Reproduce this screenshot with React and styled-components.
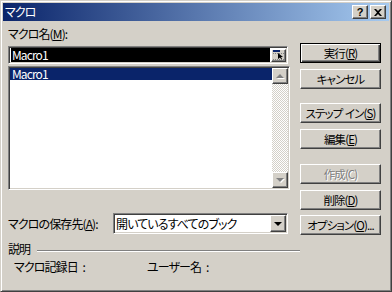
import React from "react";
import styled, { createGlobalStyle, css } from "styled-components";

const Global = createGlobalStyle`
  html, body { margin: 0; padding: 0; background: #d4d0c8; }
  body {
    font-family: "Noto Sans CJK JP", "Noto Sans", sans-serif;
    font-size: 12px;
    font-feature-settings: "palt";
    letter-spacing: -0.9px;
    color: #000;
  }
  * { box-sizing: border-box; }
`;

const raised = css`
  border: 1px solid;
  border-color: #fff #404040 #404040 #fff;
  box-shadow: inset -1px -1px #808080, inset 1px 1px #d4d0c8;
  background: #d4d0c8;
`;

const sunken = css`
  border: 1px solid;
  border-color: #808080 #fff #fff #808080;
  box-shadow: inset 1px 1px #404040, inset -1px -1px #d4d0c8;
  padding: 1px;
`;

const Window = styled.div`
  width: 392px;
  height: 292px;
  background: #d4d0c8;
  border: 1px solid;
  border-color: #d4d0c8 #404040 #404040 #d4d0c8;
  box-shadow: inset 1px 1px #fff, inset -1px -1px #808080;
  padding: 2px;
  display: flex;
  flex-direction: column;
  overflow: hidden;
`;

const TitleBar = styled.div`
  height: 18px;
  background: linear-gradient(to right, #0a246a, #a6caf0);
  display: flex;
  align-items: center;
  padding: 0 3px 0 2px;
  gap: 2px;
`;

const TitleText = styled.div`
  flex: 1;
  color: #fff;
  font-size: 12px;
  line-height: 18px;
`;

const CaptionButton = styled.div`
  ${raised};
  width: 16px;
  height: 14px;
  display: flex;
  align-items: center;
  justify-content: center;
  font-family: "Liberation Sans", sans-serif;
  font-weight: bold;
  font-size: 11px;
  letter-spacing: 0;
  line-height: 12px;
`;

const Body = styled.div`
  display: grid;
  grid-template-columns: 281px 81px;
  column-gap: 11px;
  padding: 6px 0 0 5px;
`;

const LeftCol = styled.div`
  display: flex;
  flex-direction: column;
`;

const Label = styled.div`
  height: 14px;
  line-height: 14px;
  white-space: nowrap;
`;

const EditBox = styled.div`
  ${sunken};
  margin-top: 5px;
  width: 280px;
  height: 18px;
  padding: 0 1px;
  background: #fff;
  display: flex;
  align-items: center;
`;

const EditSel = styled.div`
  flex: 1;
  height: 14px;
  margin-left: 1px;
  background: #000;
  color: #fff;
  line-height: 14px;
  padding-left: 1px;
`;

const RefButton = styled.div`
  ${raised};
  width: 15px;
  height: 13px;
  margin-left: 1px;
  display: flex;
  align-items: center;
  justify-content: center;
`;

const ListBox = styled.div`
  ${sunken};
  margin-top: 2px;
  width: 282px;
  height: 124px;
  background: #fff;
  display: flex;
`;

const Items = styled.div`
  flex: 1;
  display: flex;
  flex-direction: column;
`;

const Item = styled.div`
  height: 12px;
  line-height: 12px;
  padding-left: 2px;
  background: ${(p) => (p.$selected ? "#0a246a" : "transparent")};
  color: ${(p) => (p.$selected ? "#fff" : "#000")};
`;

const ScrollBar = styled.div`
  width: 16px;
  display: flex;
  flex-direction: column;
`;

const ScrollTrack = styled.div`
  flex: 1;
  background: repeating-conic-gradient(#fff 0 25%, #d4d0c8 0 50%) 0 0 / 2px 2px;
`;

const ScrollBtn = styled.div`
  ${raised};
  width: 16px;
  height: 16px;
  display: flex;
  align-items: center;
  justify-content: center;
`;

const SaveRow = styled.div`
  margin-top: 23px;
  display: flex;
  align-items: center;
`;

const SaveLabel = styled(Label)`
  width: 105px;
`;

const Select = styled.div`
  ${sunken};
  width: 175px;
  height: 21px;
  background: #fff;
  display: flex;
  align-items: center;
`;

const SelectText = styled.div`
  flex: 1;
  padding-left: 1px;
  line-height: 15px;
  white-space: nowrap;
  overflow: hidden;
`;

const DropBtn = styled(ScrollBtn)`
  height: 17px;
`;

const RightCol = styled.div`
  display: flex;
  flex-direction: column;
  padding-top: 16px;
`;

const Button = styled.div`
  ${raised};
  height: 20px;
  width: 81px;
  margin-top: ${(p) => p.$gap || 0}px;
  display: flex;
  align-items: center;
  justify-content: center;
  font-size: 11.5px;
  letter-spacing: -0.9px;
  word-spacing: 1px;
  line-height: 14px;
  white-space: pre;
  color: ${(p) => (p.$disabled ? "#808080" : "#000")};
  text-shadow: ${(p) => (p.$disabled ? "1px 1px #fff" : "none")};
  ${(p) =>
    p.$default &&
    css`
      border: 1px solid #000;
      box-shadow: inset 1px 1px #fff, inset -1px -1px #404040,
        inset -2px -2px #808080;
    `}
  u { text-decoration: underline; text-underline-offset: 1px; }
`;

const Desc = styled.div`
  padding: 5px 0 0 5px;
  display: flex;
  flex-direction: column;
`;

const DescHeader = styled.div`
  width: 292px;
  display: flex;
  align-items: center;
  gap: 7px;
`;

const Etched = styled.div`
  flex: 1;
  height: 2px;
  margin-top: 4px;
  border-top: 1px solid #808080;
  border-bottom: 1px solid #fff;
`;

const DescRow = styled.div`
  display: grid;
  grid-template-columns: 133px auto;
  padding-left: 6px;
  margin-top: 3px;
  line-height: 14px;
  word-spacing: 3px;
`;

const Tri = ({ dir = "down", color = "#000", shadow }) => (
  <svg width="9" height="6" viewBox="0 0 9 6">
    {shadow && (
      <polygon
        points={dir === "up" ? "5,2 9,6 1,6" : "1,2 9,2 5,6"}
        fill="#fff"
      />
    )}
    <polygon
      points={dir === "up" ? "4,1 8,5 0,5" : "0,1 8,1 4,5"}
      fill={color}
    />
  </svg>
);

const RefIcon = () => (
  <svg width="12" height="10" viewBox="0 0 12 10">
    <rect x="0" y="0" width="7" height="2" fill="#0a246a" />
    <line x1="0" y1="3.5" x2="11" y2="3.5" stroke="#808080" strokeDasharray="1 1" />
    <line x1="11.5" y1="0" x2="11.5" y2="10" stroke="#808080" strokeDasharray="1 1" />
    <line x1="0" y1="9.5" x2="11" y2="9.5" stroke="#808080" strokeDasharray="1 1" />
    <polygon points="5,3 10,7 8,7 9,9 8,9 7,7.5 5,9" fill="#000" />
  </svg>
);

const CloseGlyph = () => (
  <svg width="8" height="7" viewBox="0 0 8 7">
    <path d="M0,0 L2,0 L4,2 L6,0 L8,0 L5,3.5 L8,7 L6,7 L4,5 L2,7 L0,7 L3,3.5 Z" fill="#000" />
  </svg>
);

export default function App() {
  return (
    <>
      <Global />
      <Window>
        <TitleBar>
          <TitleText>マクロ</TitleText>
          <CaptionButton>?</CaptionButton>
          <CaptionButton>
            <CloseGlyph />
          </CaptionButton>
        </TitleBar>
        <Body>
          <LeftCol>
            <Label>
              マクロ名(<u>M</u>):
            </Label>
            <EditBox>
              <EditSel>Macro1</EditSel>
              <RefButton>
                <RefIcon />
              </RefButton>
            </EditBox>
            <ListBox>
              <Items>
                <Item $selected>Macro1</Item>
              </Items>
              <ScrollBar>
                <ScrollBtn>
                  <Tri dir="up" color="#808080" shadow />
                </ScrollBtn>
                <ScrollTrack />
                <ScrollBtn>
                  <Tri dir="down" color="#808080" shadow />
                </ScrollBtn>
              </ScrollBar>
            </ListBox>
            <SaveRow>
              <SaveLabel>
                マクロの保存先(<u>A</u>):
              </SaveLabel>
              <Select>
                <SelectText>開いているすべてのブック</SelectText>
                <DropBtn>
                  <Tri dir="down" />
                </DropBtn>
              </Select>
            </SaveRow>
          </LeftCol>
          <RightCol>
            <Button $default>
              実行(<u>R</u>)
            </Button>
            <Button $gap={6}>キャンセル</Button>
            <Button $gap={14}>
              ステップ イン(<u>S</u>)
            </Button>
            <Button $gap={6}>
              編集(<u>E</u>)
            </Button>
            <Button $gap={15} $disabled>
              作成(C)
            </Button>
            <Button $gap={6}>
              削除(<u>D</u>)
            </Button>
            <Button $gap={5}>
              オプション(<u>O</u>)...
            </Button>
          </RightCol>
        </Body>
        <Desc>
          <DescHeader>
            <span>説明</span>
            <Etched />
          </DescHeader>
          <DescRow>
            <span>マクロ記録日 :</span>
            <span>ユーザー名 :</span>
          </DescRow>
        </Desc>
      </Window>
    </>
  );
}
